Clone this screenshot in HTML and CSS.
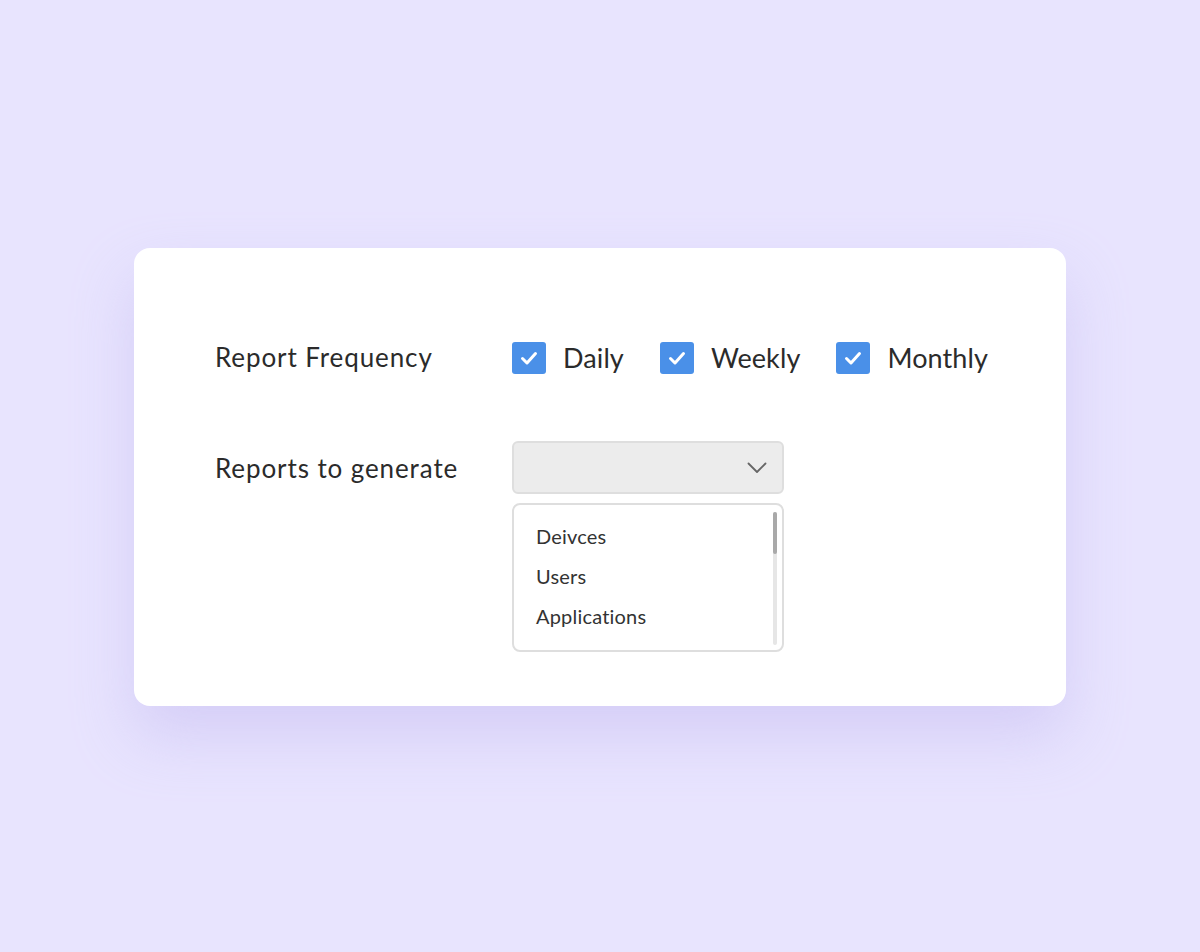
FILE: index.html
```html
<!DOCTYPE html>
<html lang="en">
<head>
    <meta charset="UTF-8">
    <meta name="viewport" content="width=device-width, initial-scale=1.0">
    <title>Report Settings</title>
    <link rel="stylesheet" href="styles.css">
</head>
<body>
    <div class="card">
        <div class="form-grid">
            <div class="label label-freq">Report Frequency</div>
            <div class="options">
                <label class="option">
                    <span class="checkbox">
                        <svg viewBox="0 0 34 34" width="34" height="34"><path d="M10.5 17.5 L15 22 L23.5 12.5" fill="none" stroke="#fff" stroke-width="3" stroke-linecap="round" stroke-linejoin="round"/></svg>
                    </span>
                    <span class="option-text">Daily</span>
                </label>
                <label class="option">
                    <span class="checkbox">
                        <svg viewBox="0 0 34 34" width="34" height="34"><path d="M10.5 17.5 L15 22 L23.5 12.5" fill="none" stroke="#fff" stroke-width="3" stroke-linecap="round" stroke-linejoin="round"/></svg>
                    </span>
                    <span class="option-text">Weekly</span>
                </label>
                <label class="option">
                    <span class="checkbox">
                        <svg viewBox="0 0 34 34" width="34" height="34"><path d="M10.5 17.5 L15 22 L23.5 12.5" fill="none" stroke="#fff" stroke-width="3" stroke-linecap="round" stroke-linejoin="round"/></svg>
                    </span>
                    <span class="option-text">Monthly</span>
                </label>
            </div>

            <div class="label label-reports">Reports to generate</div>
            <div class="picker">
                <div class="select">
                    <svg class="chevron" viewBox="0 0 20 12" width="20" height="12"><path d="M1.5 1.5 L10 10 L18.5 1.5" fill="none" stroke="#666" stroke-width="1.8" stroke-linecap="round" stroke-linejoin="round"/></svg>
                </div>
                <div class="listbox">
                    <ul class="items">
                        <li>Deivces</li>
                        <li>Users</li>
                        <li>Applications</li>
                    </ul>
                    <div class="scroll-track">
                        <div class="scroll-thumb"></div>
                    </div>
                </div>
            </div>
        </div>
    </div>
</body>
</html>
```

FILE: styles.css
```css
body {
    font-family: "Lato", "Noto Sans", sans-serif;
    background-color: #e8e4fe;
    margin: 0;
    padding: 248px 0 0 134px;
    height: 952px;
    box-sizing: border-box;
    color: #2b2b2b;
}

.card {
    width: 932px;
    height: 458px;
    box-sizing: border-box;
    background-color: #fff;
    border-radius: 16px;
    padding: 94px 0 0 81px;
    box-shadow: 0 30px 60px rgba(190, 180, 240, 0.45);
}

.form-grid {
    display: grid;
    grid-template-columns: 297px auto;
    row-gap: 67px;
}

.label {
    font-size: 26px;
    letter-spacing: 0.9px;
}

.label-freq {
    line-height: 30px;
}

.label-reports {
    line-height: 54px;
}

.options {
    display: flex;
    align-items: center;
    gap: 36px;
}

.option {
    display: flex;
    align-items: center;
    gap: 17px;
}

.checkbox {
    width: 34px;
    height: 32px;
    border-radius: 3px;
    background-color: #4a90e8;
    display: flex;
    align-items: center;
    justify-content: center;
}

.checkbox svg {
    display: block;
}

.option-text {
    font-size: 27px;
    letter-spacing: 0.1px;
    line-height: 30px;
}

.picker {
    width: 272px;
    display: flex;
    flex-direction: column;
    gap: 9px;
}

.select {
    height: 53px;
    box-sizing: border-box;
    background-color: #ececec;
    border: 2px solid #dedede;
    border-radius: 6px;
    display: flex;
    align-items: center;
    justify-content: flex-end;
    padding-right: 15px;
}

.listbox {
    height: 149px;
    box-sizing: border-box;
    border: 2px solid #dedede;
    border-radius: 8px;
    display: flex;
    padding: 7px 5px 5px 0;
}

.items {
    list-style: none;
    margin: 0;
    padding: 4px 0 0 22px;
    flex: 1;
    font-size: 20px;
    letter-spacing: 0.2px;
    color: #333;
}

.items li {
    line-height: 40px;
}

.scroll-track {
    width: 4px;
    background-color: #e6e6e6;
    border-radius: 2px;
}

.scroll-thumb {
    height: 42px;
    background-color: #a9a9a9;
    border-radius: 2px;
}
```
